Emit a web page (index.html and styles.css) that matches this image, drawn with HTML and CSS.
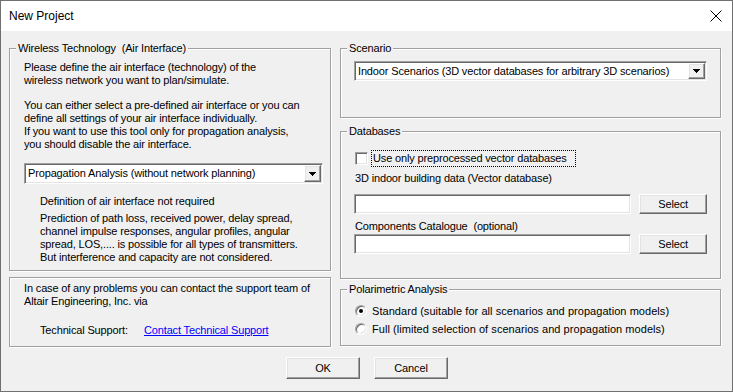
FILE: index.html
```html
<!DOCTYPE html>
<html lang="en">
<head>
    <meta charset="UTF-8">
    <title>New Project</title>
    <link rel="stylesheet" href="styles.css">
</head>
<body>
<div class="window">
    <div class="titlebar">
        <span class="title">New Project</span>
        <svg class="close" width="12" height="12" viewBox="0 0 12 12">
            <path d="M0.5 0.5 L11.5 11.5 M11.5 0.5 L0.5 11.5" stroke="#000" stroke-width="1"/>
        </svg>
    </div>

    <div class="client">
        <div class="columns">
            <div class="col-left">
                <fieldset class="group air">
                    <legend>Wireless Technology &nbsp;(Air Interface)</legend>
                    <p>Please define the air interface (technology) of the<br>wireless network you want to plan/simulate.</p>
                    <p class="para">You can either select a pre-defined air interface or you can<br>define all settings of your air interface individually.<br>If you want to use this tool only for propagation analysis,<br>you should disable the air interface.</p>
                    <div class="combo air-combo">
                        <span class="combo-text">Propagation Analysis (without network planning)</span>
                        <span class="combo-btn raised">
                            <svg width="7" height="4" viewBox="0 0 7 4"><polygon points="0,0 7,0 3.5,4" fill="#000"/></svg>
                        </span>
                    </div>
                    <p class="indent first">Definition of air interface not required</p>
                    <p class="indent desc">Prediction of path loss, received power, delay spread,<br>channel impulse responses, angular profiles, angular<br>spread, LOS,.... is possible for all types of transmitters.<br>But interference and capacity are not considered.</p>
                </fieldset>

                <div class="group support">
                    <p>In case of any problems you can contact the support team of<br>Altair Engineering, Inc. via</p>
                    <div class="support-row">
                        <span class="support-label">Technical Support:</span>
                        <a href="#" class="link">Contact Technical Support</a>
                    </div>
                </div>
            </div>

            <div class="col-right">
                <fieldset class="group scenario">
                    <legend>Scenario</legend>
                    <div class="combo scen-combo">
                        <span class="combo-text">Indoor Scenarios (3D vector databases for arbitrary 3D scenarios)</span>
                        <span class="combo-btn raised">
                            <svg width="7" height="4" viewBox="0 0 7 4"><polygon points="0,0 7,0 3.5,4" fill="#000"/></svg>
                        </span>
                    </div>
                </fieldset>

                <fieldset class="group databases">
                    <legend>Databases</legend>
                    <div class="check-row">
                        <span class="check sunken"></span>
                        <span class="focus">Use only preprocessed vector databases</span>
                    </div>
                    <p class="field-label first-label">3D indoor building data (Vector database)</p>
                    <div class="file-row">
                        <span class="input sunken"></span>
                        <span class="btn raised select">Select</span>
                    </div>
                    <p class="field-label">Components Catalogue &nbsp;(optional)</p>
                    <div class="file-row second">
                        <span class="input sunken"></span>
                        <span class="btn raised select">Select</span>
                    </div>
                </fieldset>

                <fieldset class="group polar">
                    <legend>Polarimetric Analysis</legend>
                    <div class="radio-row">
                        <span class="radio checked"></span>
                        <span>Standard (suitable for all scenarios and propagation models)</span>
                    </div>
                    <div class="radio-row">
                        <span class="radio"></span>
                        <span>Full (limited selection of scenarios and propagation models)</span>
                    </div>
                </fieldset>
            </div>
        </div>

        <div class="buttons">
            <span class="btn raised dlg">OK</span>
            <span class="btn raised dlg">Cancel</span>
        </div>
    </div>
</div>
</body>
</html>
```

FILE: styles.css
```css
body {
    margin: 0;
    background: #ffffff;
    font-family: "Liberation Sans", Arial, sans-serif;
    font-size: 11px;
    color: #000000;
}

.window {
    width: 733px;
    height: 392px;
    box-sizing: border-box;
    border: 1px solid #707070;
    background: #f0f0f0;
    display: flex;
    flex-direction: column;
}

.titlebar {
    height: 30px;
    flex-shrink: 0;
    background: #ffffff;
    display: flex;
    align-items: center;
    justify-content: space-between;
    padding: 0 10px 0 8px;
    font-size: 12px;
}

.close {
    display: block;
}

.client {
    padding: 11px 10px 0 8px;
    letter-spacing: -0.15px;
}

.columns {
    display: flex;
    gap: 9px;
}

.col-left {
    width: 322px;
    display: flex;
    flex-direction: column;
    gap: 6px;
}

.col-right {
    width: 381px;
    display: flex;
    flex-direction: column;
}

p {
    margin: 0;
    line-height: 13px;
}

/* etched group boxes */
.group {
    margin: 0;
    min-width: 0;
    border: 1px solid #a0a0a0;
    box-shadow: inset 1px 1px 0 #ffffff, 1px 1px 0 #ffffff;
}

.group legend {
    line-height: 13px;
    padding: 0 2px;
    margin-left: -7px;
    background: #f0f0f0;
}

.air {
    padding: 6px 7px 6px 14px;
}

.air legend {
    margin-left: -8px;
}

.para {
    margin-top: 12px;
}

.air-combo {
    margin-top: 12px;
}

.indent {
    padding-left: 16px;
}

.first {
    margin-top: 11px;
}

.desc {
    margin-top: 4px;
}

.support {
    padding: 4px 7px 9px 14px;
}

.support-row {
    display: flex;
    margin-top: 16px;
    line-height: 13px;
    padding-left: 16px;
}

.support-label {
    width: 104px;
}

.link {
    color: #0000ff;
    text-decoration: underline;
}

/* 3d controls */
.sunken {
    box-sizing: border-box;
    background: #ffffff;
    border: 1px solid;
    border-color: #a0a0a0 #ffffff #ffffff #a0a0a0;
    box-shadow: inset 1px 1px 0 #696969, inset -1px -1px 0 #e3e3e3;
}

.raised {
    box-sizing: border-box;
    background: #f0f0f0;
    border: 1px solid;
    border-color: #ffffff #696969 #696969 #ffffff;
    box-shadow: inset -1px -1px 0 #a0a0a0, inset 1px 1px 0 #e3e3e3;
}

.combo {
    box-sizing: border-box;
    height: 21px;
    background: #ffffff;
    border: 1px solid;
    border-color: #a0a0a0 #ffffff #ffffff #a0a0a0;
    box-shadow: inset 1px 1px 0 #696969, inset -1px -1px 0 #e3e3e3;
    padding: 1px;
    display: flex;
    align-items: stretch;
}

.combo-text {
    flex: 1;
    padding-left: 2px;
    line-height: 17px;
    white-space: nowrap;
}

.combo-btn {
    width: 17px;
    display: flex;
    align-items: center;
    justify-content: center;
}

.combo-btn svg {
    display: block;
    shape-rendering: crispEdges;
}

.scenario {
    padding: 6px 13px 36px 13px;
}

.scen-combo {
    height: 20px;
}

.databases {
    margin-top: 7px;
    padding: 12px 13px 24px 13px;
}

.check-row {
    display: flex;
    align-items: center;
    padding-left: 1px;
    gap: 3px;
}

.check {
    width: 13px;
    height: 13px;
}

.focus {
    border: 1px dotted #000000;
    padding: 1px 8px 1px 1px;
    line-height: 13px;
}

.field-label {
    padding-left: 1px;
    margin-top: 6px;
}

.first-label {
    margin-top: 5px;
}

.file-row {
    display: flex;
    gap: 8px;
    margin-top: 9px;
}

.file-row.second {
    margin-top: 1px;
}

.input {
    width: 278px;
    height: 20px;
}

.btn {
    display: flex;
    align-items: center;
    justify-content: center;
    line-height: 13px;
}

.select {
    width: 68px;
    height: 20px;
}

.polar {
    margin-top: 4px;
    padding: 7px 13px 8px 13px;
}

.radio-row {
    display: flex;
    align-items: center;
    height: 16px;
    gap: 5px;
    padding-left: 1px;
    letter-spacing: 0.05px;
}

.radio-row + .radio-row {
    margin-top: 2px;
}

.radio {
    width: 12px;
    height: 12px;
    box-sizing: border-box;
    border-radius: 50%;
    background: #ffffff;
    border: 1px solid;
    border-color: #a0a0a0 #ffffff #ffffff #a0a0a0;
    box-shadow: inset 1px 1px 0 #696969, inset -1px -1px 0 #e3e3e3;
    display: flex;
    align-items: center;
    justify-content: center;
}

.radio.checked::after {
    content: "";
    width: 4px;
    height: 4px;
    border-radius: 50%;
    background: #000000;
}

.buttons {
    display: flex;
    justify-content: center;
    gap: 14px;
    margin-top: 10px;
    padding-left: 3px;
}

.dlg {
    width: 74px;
    height: 22px;
}
```
